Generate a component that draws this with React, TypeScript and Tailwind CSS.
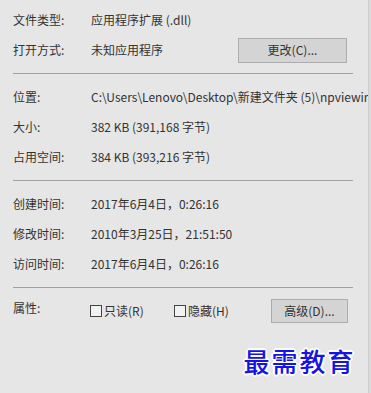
const rows = {
  top: [
    { label: '文件类型:', value: '应用程序扩展 (.dll)' },
  ],
  loc: [
    { label: '位置:', value: 'C:\\Users\\Lenovo\\Desktop\\新建文件夹 (5)\\npviewir' },
    { label: '大小:', value: '382 KB (391,168 字节)' },
    { label: '占用空间:', value: '384 KB (393,216 字节)' },
  ],
  time: [
    { label: '创建时间:', value: '2017年6月4日，0:26:16' },
    { label: '修改时间:', value: '2010年3月25日，21:51:50' },
    { label: '访问时间:', value: '2017年6月4日，0:26:16' },
  ],
};

function Row({ label, value }: { label: string; value: string }) {
  return (
    <div className="flex h-[30px] items-center">
      <div className="w-[78px] shrink-0">{label}</div>
      <div className="whitespace-nowrap">{value}</div>
    </div>
  );
}

function Divider() {
  return <div className="my-[8px] mr-[15px] h-px bg-[#a0a0a0]" />;
}

function Checkbox({ label }: { label: string }) {
  return (
    <div className="flex items-center gap-[2px]">
      <span className="h-[12px] w-[12px] border border-[#444] bg-[#f2f2f2]" />
      <span>{label}</span>
    </div>
  );
}

export default function App() {
  return (
    <div
      className="relative flex h-[393px] w-[371px] overflow-hidden bg-[#e6e6e6] text-[12px] text-[#333]"
      style={{ fontFamily: '"Noto Sans CJK SC", "Noto Sans", sans-serif' }}
    >
      <div className="flex-1 pl-[13px] pt-[5px]">
        <Row {...rows.top[0]} />
        <div className="flex h-[30px] items-center">
          <div className="w-[78px] shrink-0">打开方式:</div>
          <div className="w-[147px]">未知应用程序</div>
          <button className="h-[25px] w-[109px] border border-[#adadad] bg-[#d4d4d4] text-[12px] text-[#333]">
            更改(C)...
          </button>
        </div>
        <Divider />
        {rows.loc.map((r) => (
          <Row key={r.label} {...r} />
        ))}
        <Divider />
        {rows.time.map((r) => (
          <Row key={r.label} {...r} />
        ))}
        <Divider />
        <div className="mt-[3px] flex h-[30px] items-center">
          <div className="w-[77px] shrink-0 -translate-y-[3px]">属性:</div>
          <div className="w-[84px]">
            <Checkbox label="只读(R)" />
          </div>
          <div className="w-[97px]">
            <Checkbox label="隐藏(H)" />
          </div>
          <button className="h-[24px] w-[77px] border border-[#adadad] bg-[#d4d4d4] text-[12px] text-[#333]">
            高级(D)...
          </button>
        </div>
        <div className="mt-[15px] flex justify-end pr-[13px]">
          <span
            className="text-[26px] font-medium tracking-[2px] text-[#1414e6]"
            style={{
              fontFamily: '"Noto Sans CJK SC", sans-serif',
              textShadow:
                '1px 1px 0 #fff, -1px -1px 0 #fff, 1px -1px 0 #fff, -1px 1px 0 #fff, 2px 0 0 #fff, -2px 0 0 #fff, 0 2px 0 #fff, 0 -2px 0 #fff',
            }}
          >
            最需教育
          </span>
        </div>
      </div>
      <div className="w-[8px] shrink-0 border-l border-[#cfcfcf] bg-[#dadada]" />
      <div className="w-[2px] shrink-0 bg-[#8fae7c]" />
    </div>
  );
}
